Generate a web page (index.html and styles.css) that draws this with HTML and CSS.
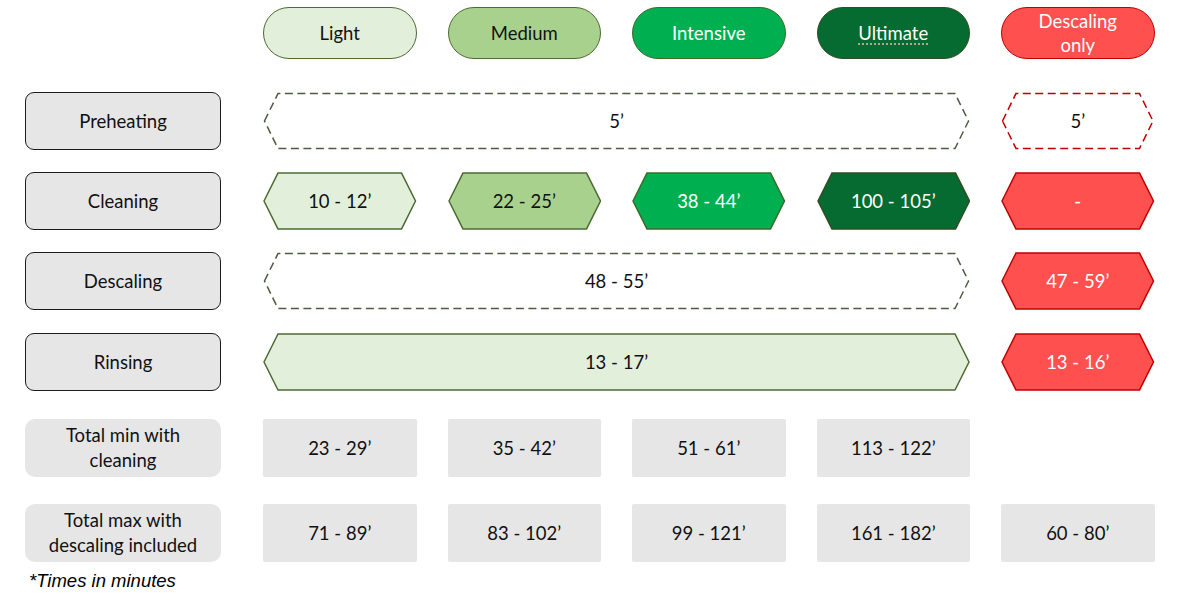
FILE: index.html
```html
<!DOCTYPE html>
<html>
<head>
<meta charset="utf-8">
<link rel="stylesheet" href="styles.css">
</head>
<body>
<div class="chart">
  <div class="row pills">
    <div></div>
    <div class="pill p-light">Light</div>
    <div class="pill p-medium">Medium</div>
    <div class="pill p-intensive">Intensive</div>
    <div class="pill p-ultimate"><span class="spell">Ultimate</span></div>
    <div class="pill p-red">Descaling<br>only</div>
  </div>

  <div class="row step first">
    <div class="label">Preheating</div>
    <div class="hex span4">
      <svg viewBox="0 0 707 58"><polygon class="dash-green" points="1.5,29 15,1.5 692,1.5 705.5,29 692,56.5 15,56.5"/></svg>
      <span>5’</span>
    </div>
    <div class="hex">
      <svg viewBox="0 0 154 58"><polygon class="dash-red" points="1.5,29 15,1.5 139,1.5 152.5,29 139,56.5 15,56.5"/></svg>
      <span>5’</span>
    </div>
  </div>

  <div class="row step">
    <div class="label">Cleaning</div>
    <div class="hex">
      <svg viewBox="0 0 154 58"><polygon class="f-light" points="1,29 15,1 139,1 153,29 139,57 15,57"/></svg>
      <span>10 - 12’</span>
    </div>
    <div class="hex">
      <svg viewBox="0 0 154 58"><polygon class="f-medium" points="1,29 15,1 139,1 153,29 139,57 15,57"/></svg>
      <span>22 - 25’</span>
    </div>
    <div class="hex light-text">
      <svg viewBox="0 0 154 58"><polygon class="f-intensive" points="1,29 15,1 139,1 153,29 139,57 15,57"/></svg>
      <span>38 - 44’</span>
    </div>
    <div class="hex light-text">
      <svg viewBox="0 0 154 58"><polygon class="f-ultimate" points="1,29 15,1 139,1 153,29 139,57 15,57"/></svg>
      <span>100 - 105’</span>
    </div>
    <div class="hex light-text">
      <svg viewBox="0 0 154 58"><polygon class="f-red" points="1,29 15,1 139,1 153,29 139,57 15,57"/></svg>
      <span>-</span>
    </div>
  </div>

  <div class="row step">
    <div class="label">Descaling</div>
    <div class="hex span4">
      <svg viewBox="0 0 707 58"><polygon class="dash-green" points="1.5,29 15,1.5 692,1.5 705.5,29 692,56.5 15,56.5"/></svg>
      <span>48 - 55’</span>
    </div>
    <div class="hex light-text">
      <svg viewBox="0 0 154 58"><polygon class="f-red" points="1,29 15,1 139,1 153,29 139,57 15,57"/></svg>
      <span>47 - 59’</span>
    </div>
  </div>

  <div class="row step">
    <div class="label">Rinsing</div>
    <div class="hex span4">
      <svg viewBox="0 0 707 58"><polygon class="f-light" points="1,29 15,1 692,1 706,29 692,57 15,57"/></svg>
      <span>13 - 17’</span>
    </div>
    <div class="hex light-text">
      <svg viewBox="0 0 154 58"><polygon class="f-red" points="1,29 15,1 139,1 153,29 139,57 15,57"/></svg>
      <span>13 - 16’</span>
    </div>
  </div>

  <div class="row total t-min">
    <div class="tlabel">Total min with<br>cleaning</div>
    <div class="tval">23 - 29’</div>
    <div class="tval">35 - 42’</div>
    <div class="tval">51 - 61’</div>
    <div class="tval">113 - 122’</div>
    <div></div>
  </div>

  <div class="row total t-max">
    <div class="tlabel">Total max with<br>descaling included</div>
    <div class="tval">71 - 89’</div>
    <div class="tval">83 - 102’</div>
    <div class="tval">99 - 121’</div>
    <div class="tval">161 - 182’</div>
    <div class="tval">60 - 80’</div>
  </div>

  <div class="note">*Times in minutes</div>
</div>
</body>
</html>
```

FILE: styles.css
```css
html, body {
  margin: 0;
  padding: 0;
  background: #ffffff;
}

body {
  font-family: Lato, "Open Sans", sans-serif;
  color: #111;
}

.chart {
  display: flex;
  flex-direction: column;
  padding: 7px 0 0 25px;
}

.row {
  display: grid;
  grid-template-columns: 207px repeat(5, 153.5px);
  column-gap: 31px;
  height: 58px;
}

.row.pills {
  height: 52px;
}

.step.first {
  margin-top: 33px;
}

.step {
  margin-top: 22px;
}

.step:nth-of-type(5) {
  margin-top: 23px;
}

.t-min {
  margin-top: 28px;
}

.t-max {
  margin-top: 27px;
}

.pill {
  box-sizing: border-box;
  border-radius: 26px;
  border: 1.5px solid #4e6b34;
  display: flex;
  align-items: center;
  justify-content: center;
  text-align: center;
  font-size: 18.5px;
  line-height: 24px;
}

.p-light { background: #e2efda; }
.p-medium { background: #a9d18e; }
.p-intensive { background: #00b050; color: #fff; border-color: #3c6b2a; }
.p-ultimate { background: #066b30; color: #fff; border-color: #2f4f22; }
.p-red { background: #ff5050; color: #fff; border-color: #c00000; line-height: 24px; }

.spell {
  text-decoration: underline dotted rgba(200, 170, 170, 0.9) 1.5px;
  text-underline-offset: 3px;
}

.label {
  box-sizing: border-box;
  width: 196px;
  height: 58px;
  background: #e7e6e6;
  border: 1.5px solid #1c1c1c;
  border-radius: 9px;
  display: flex;
  align-items: center;
  justify-content: center;
  font-size: 18.5px;
}

.hex {
  position: relative;
  display: flex;
  align-items: center;
  justify-content: center;
  font-size: 18.5px;
}

.hex svg {
  position: absolute;
  inset: 0;
  width: 100%;
  height: 100%;
}

.hex span {
  position: relative;
}

.span4 {
  grid-column: 2 / span 4;
}

.light-text {
  color: #fff;
}

.dash-green {
  fill: #fff;
  stroke: #4f5a42;
  stroke-width: 1.5;
  stroke-dasharray: 8 4.5;
}

.dash-red {
  fill: #fff;
  stroke: #c00000;
  stroke-width: 1.5;
  stroke-dasharray: 8 4.5;
}

.f-light { fill: #e2efda; stroke: #4e6b34; stroke-width: 1.5; }
.f-medium { fill: #a9d18e; stroke: #4e6b34; stroke-width: 1.5; }
.f-intensive { fill: #00b050; stroke: #3c6b2a; stroke-width: 1.5; }
.f-ultimate { fill: #066b30; stroke: #2f4f22; stroke-width: 1.5; }
.f-red { fill: #ff5050; stroke: #c00000; stroke-width: 1.5; }

.tlabel {
  width: 196px;
  height: 58px;
  background: #e7e6e6;
  border-radius: 10px;
  display: flex;
  align-items: center;
  justify-content: center;
  text-align: center;
  font-size: 18.5px;
  line-height: 25px;
}

.tval {
  background: #e7e6e6;
  border-radius: 2px;
  display: flex;
  align-items: center;
  justify-content: center;
  font-size: 18.5px;
}

.note {
  margin-top: 8px;
  margin-left: 4px;
  font-family: "Liberation Sans", Arial, sans-serif;
  font-style: italic;
  font-size: 18.5px;
  color: #000;
}
```
